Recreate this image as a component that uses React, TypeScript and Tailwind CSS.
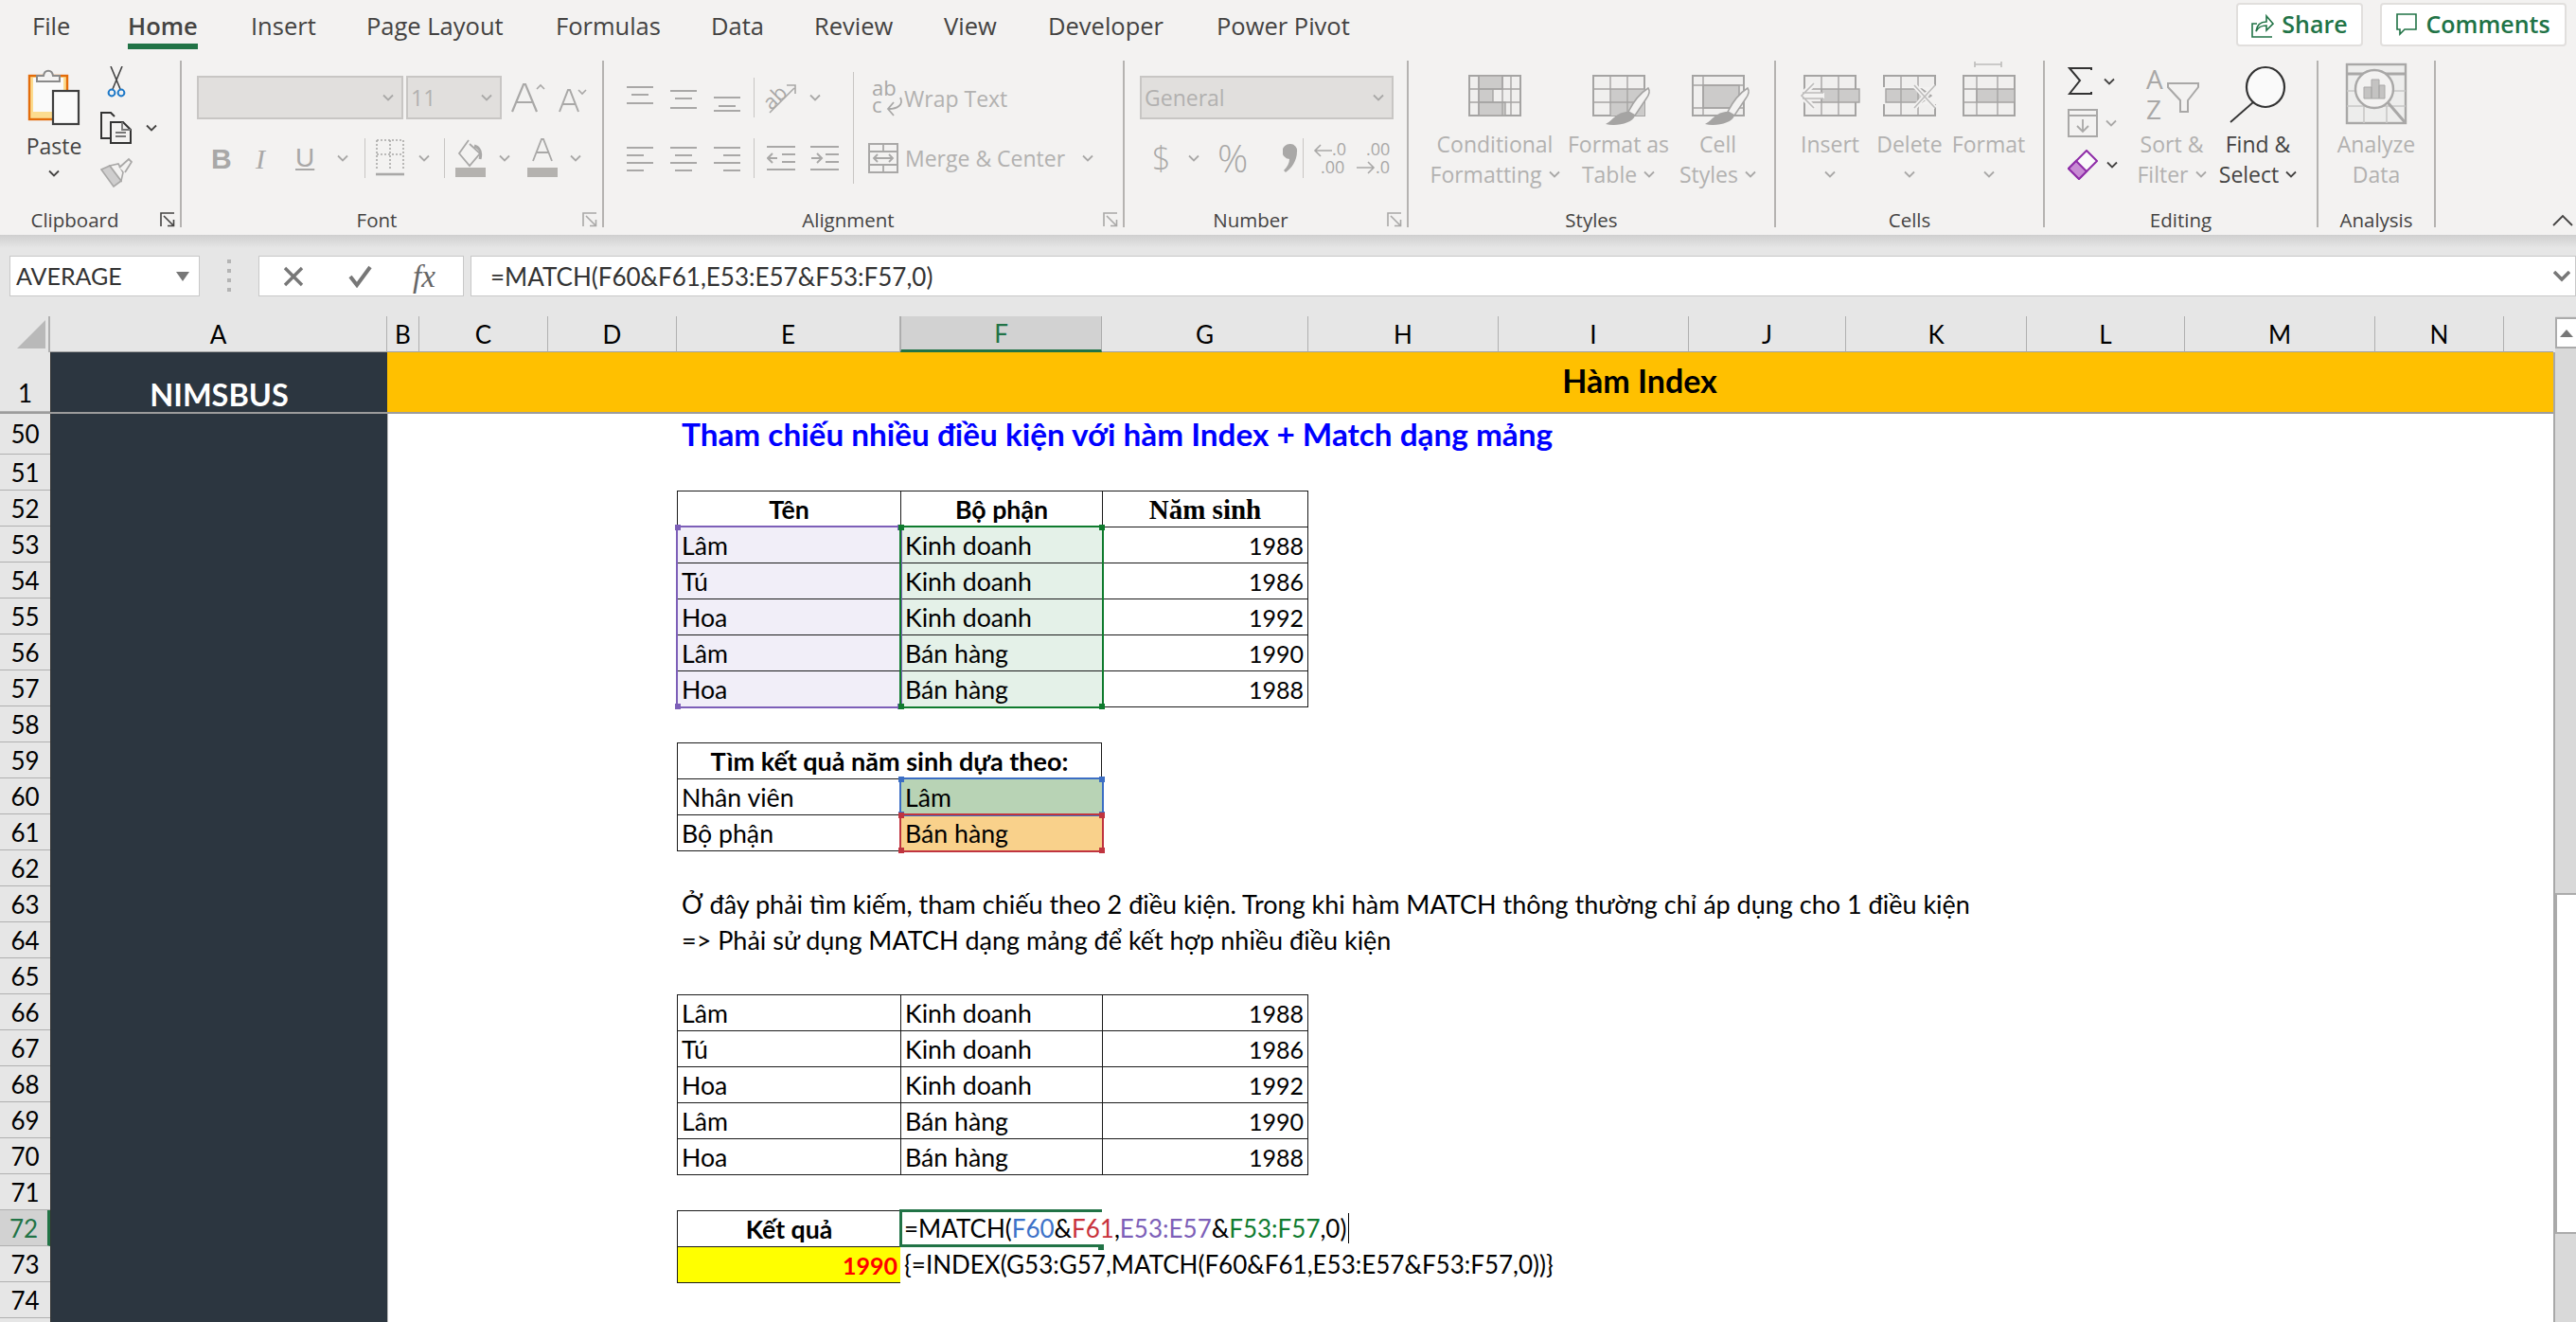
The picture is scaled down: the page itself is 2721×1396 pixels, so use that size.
import React from "react"

const COLS =
  "grid grid-cols-[53px_356px_34px_136px_136px_236px_213px_218px_201px_201px_166px_191px_167px_201px_136px_52px]"
const OFF = "#a9a8a7"
const ON = "#444342"
const SHEET = "font-['Lato','Noto_Sans',sans-serif] text-[26.7px] leading-[34px] text-black"

function Chev({ c = OFF, w = 12 }: { c?: string; w?: number }) {
  return (
    <svg width={w} height={8} viewBox="0 0 12 8" className="shrink-0">
      <path d="M1 1.5 6 6.5 11 1.5" fill="none" stroke={c} strokeWidth="1.8" />
    </svg>
  )
}

function Launcher({ c = OFF }: { c?: string }) {
  return (
    <svg width={16} height={16} viewBox="0 0 16 16">
      <path d="M1 15V1h14M4 4l10 10M8 14.5h6.5V8" fill="none" stroke={c} strokeWidth="1.6" />
    </svg>
  )
}

function VSep({ h = 42 }: { h?: number }) {
  return <div className="w-[1px] bg-[#c8c6c4] shrink-0" style={{ height: h }} />
}

// three or four strokes, used by all the alignment buttons
function Strokes({ rows, h = 30 }: { rows: [number, number, number][]; h?: number }) {
  return (
    <svg width={28} height={h} viewBox={`0 0 28 ${h}`} className="shrink-0">
      {rows.map(([y, a, b], i) => (
        <path key={i} d={`M${a} ${y}H${b}`} stroke={OFF} strokeWidth="2" />
      ))}
    </svg>
  )
}

function PasteIcon() {
  return (
    <svg width={56} height={62} viewBox="0 0 56 62">
      <rect x="2" y="9" width="40" height="46" fill="#fcdc8f" stroke="#e36c0a" strokeWidth="2.4" />
      <rect x="6" y="11" width="32" height="36" fill="#fafafa" />
      <path d="M10 15V9h7c1-7 9-7 10 0h7v6z" fill="#f3f2f1" stroke="#8a8a8a" strokeWidth="2" />
      <rect x="27" y="25" width="27" height="35" fill="#fafafa" stroke="#3f3f3f" strokeWidth="2.2" />
    </svg>
  )
}

function CutIcon() {
  return (
    <svg width={22} height={34} viewBox="0 0 22 34">
      <path d="M5 0l10 24M17 0L7 24" fill="none" stroke="#444" strokeWidth="1.6" />
      <circle cx="6" cy="28" r="3.4" fill="none" stroke="#1e79c8" strokeWidth="2" />
      <circle cx="16" cy="28" r="3.4" fill="none" stroke="#1e79c8" strokeWidth="2" />
    </svg>
  )
}

function CopyIcon() {
  return (
    <svg width={34} height={34} viewBox="0 0 34 34">
      <path d="M10 28H1V1h10l4 4" fill="none" stroke="#333" strokeWidth="2" />
      <path d="M11 11h13l8 8v14H11z" fill="none" stroke="#333" strokeWidth="2" />
      <path d="M23 11v8h9M16 22h11M16 26h11" fill="none" stroke="#777" strokeWidth="1.8" />
    </svg>
  )
}

function BrushIcon() {
  return (
    <svg width={34} height={32} viewBox="0 0 34 32">
      <path d="M10 9 1 13l13 18 8-6z" fill="#cfcece" stroke="#a9a8a7" strokeWidth="1.6" />
      <path d="M10 9l9-2 5 9-2 9z" fill="#f3f2f1" stroke="#a9a8a7" strokeWidth="1.6" />
      <path d="M20 11 30 2l3 3-7 11" fill="#f3f2f1" stroke="#a9a8a7" strokeWidth="1.8" />
    </svg>
  )
}

function BordersIcon() {
  return (
    <svg width={30} height={42} viewBox="0 0 30 42">
      <path d="M1 2h28M1 2v30M29 2v30M1 17h28M15 2v30" fill="none" stroke={OFF} strokeWidth="1.6" strokeDasharray="2 2" />
      <path d="M0 38h30" stroke={OFF} strokeWidth="2.6" />
    </svg>
  )
}

function FillIcon() {
  return (
    <svg width={32} height={42} viewBox="0 0 32 42">
      <path d="M14 2 4 16l11 13 11-13L15 6" fill="none" stroke={OFF} strokeWidth="1.8" />
      <path d="M20 8c6 2 8 6 6 14" fill="none" stroke={OFF} strokeWidth="3" />
      <rect x="0" y="31" width="32" height="10" fill="#b4b2af" />
    </svg>
  )
}

function FontColorIcon() {
  return (
    <svg width={32} height={42} viewBox="0 0 32 42">
      <path d="M6 24 15 1h2l9 23M10 15h12" fill="none" stroke={OFF} strokeWidth="1.8" />
      <rect x="0" y="31" width="32" height="10" fill="#b4b2af" />
    </svg>
  )
}

function Brush({ g }: { g: string }) {
  return (
    <>
      <path d="M64 31C66 34 65 38 62 42L50 60 43 56C48 46 56 36 64 31z" fill="#f3f2f1" stroke={g} strokeWidth="1.6" />
      <path d="M43 56 50 60C48 68 30 72 19 69 26 66 30 56 43 56z" fill={g} />
    </>
  )
}

function GridIcon({ kind }: { kind: "cond" | "table" | "cell" | "insert" | "delete" | "format" }) {
  const g = "#a5a4a3"
  return (
    <svg width={66} height={62} viewBox="0 0 66 62" className="shrink-0 overflow-visible">
      {kind === "cond" && (
        <>
          <rect x="6" y="18" width="54" height="42" fill="#f0efee" stroke={g} strokeWidth="2" />
          <path d="M16 18h25v14H16zM16 32h15v14H16zM16 46h28v14H16z" fill="#cccbca" stroke={g} strokeWidth="1.4" />
          <path d="M6 32h54M6 46h54M16 18v42M41 18v42M50 18v42" stroke={g} strokeWidth="1.4" />
        </>
      )}
      {kind === "table" && (
        <>
          <rect x="6" y="18" width="54" height="42" fill="#f0efee" stroke={g} strokeWidth="2" />
          <path d="M24 32h36v28H24z" fill="#cccbca" />
          <path d="M6 32h54M6 46h54M24 18v42M42 18v42" stroke={g} strokeWidth="1.4" />
          <Brush g={g} />
        </>
      )}
      {kind === "cell" && (
        <>
          <rect x="6" y="18" width="54" height="42" fill="#f0efee" stroke={g} strokeWidth="2" />
          <path d="M17 28h38v24H17z" fill="#cccbca" stroke={g} strokeWidth="1.6" />
          <path d="M6 28h54M6 52h54M17 18v42" stroke={g} strokeWidth="1.4" />
          <Brush g={g} />
        </>
      )}
      {kind === "insert" && (
        <>
          <rect x="6" y="18" width="54" height="42" fill="#f0efee" stroke={g} strokeWidth="2" />
          <path d="M24 32h40v14H24z" fill="#cccbca" stroke={g} strokeWidth="1.4" />
          <path d="M24 18v42M42 18v42M6 32h18M6 46h18" stroke={g} strokeWidth="1.4" />
          <path d="M16 26 3 39l13 13M3 39h24" fill="none" stroke="#f3f2f1" strokeWidth="6" />
          <path d="M16 26 3 39l13 13M4 36h22M4 42h22" fill="none" stroke="#bdbcbb" strokeWidth="1.6" />
        </>
      )}
      {kind === "delete" && (
        <>
          <path d="M6 30V18h54v12M6 48v12h54V48" fill="#f0efee" stroke={g} strokeWidth="2" />
          <path d="M8 32h38l10 7-10 7H8z" fill="#cccbca" stroke={g} strokeWidth="1.4" />
          <path d="M24 18v42M42 18v42" stroke={g} strokeWidth="1.4" />
          <path d="M38 28l22 24M60 28 38 52" stroke="#f3f2f1" strokeWidth="5" />
          <path d="M38 28l22 24M60 28 38 52" stroke="#bdbcbb" strokeWidth="1.6" />
        </>
      )}
      {kind === "format" && (
        <>
          <rect x="6" y="18" width="54" height="42" fill="#f0efee" stroke={g} strokeWidth="2" />
          <path d="M20 32h40v14H20z" fill="#cccbca" stroke={g} strokeWidth="1.4" />
          <path d="M20 18v42M42 18v42M6 32h14M6 46h14" stroke={g} strokeWidth="1.4" />
          <path d="M18 6h28M18 3v6M46 3v6" stroke="#bdbcbb" strokeWidth="1.6" />
        </>
      )}
    </svg>
  )
}

function BigBtn({
  center,
  width,
  icon,
  lines,
  chevOn,
  dark,
}: {
  center: number
  width: number
  icon: React.ReactNode
  lines: string[]
  chevOn?: boolean
  dark?: boolean
}) {
  const color = dark ? "text-[#444342]" : "text-[#b2b1b0]"
  return (
    <div className={"flex flex-col items-center shrink-0 " + color} style={{ width, marginLeft: center }}>
      <div className="h-[60px] flex items-end justify-center">{icon}</div>
      <div className="h-[32px] text-[23px] leading-[32px] whitespace-nowrap mt-[12px]">{lines[0]}</div>
      {lines[1] !== undefined ? (
        <div className="h-[32px] text-[23px] leading-[32px] whitespace-nowrap flex items-center gap-[7px]">
          {lines[1]}
          {chevOn && <Chev c={dark ? ON : OFF} />}
        </div>
      ) : (
        <div className="h-[32px] flex items-center">
          <Chev c={OFF} />
        </div>
      )}
    </div>
  )
}

function Group({
  w,
  label,
  launcher,
  launcherDark,
  children,
}: {
  w: number
  label: string
  launcher?: boolean
  launcherDark?: boolean
  children: React.ReactNode
}) {
  return (
    <div className="flex flex-col h-[176px] border-r-2 border-[#b5b3b1] shrink-0" style={{ width: w }}>
      <div className="h-[152px] flex">{children}</div>
      <div className="h-[24px] pt-[4px] grid grid-cols-[1fr_auto_1fr] items-center text-[20.5px] leading-[24px] text-[#444342]">
        <span />
        <span className={launcher ? "mr-[32px]" : ""}>{label}</span>
        <span className="justify-self-end pr-[5px]">{launcher && <Launcher c={launcherDark ? ON : OFF} />}</span>
      </div>
    </div>
  )
}

function Combo({ w, text }: { w: number; text?: string }) {
  return (
    <div
      className="h-[46px] bg-[#e1dfdd] border-2 border-[#c8c6c4] flex items-center justify-between pl-[3px] pr-[8px] text-[23px] leading-[30px] text-[#b2b1b0] shrink-0"
      style={{ width: w }}
    >
      <span>{text}</span>
      <Chev />
    </div>
  )
}

function Ribbon() {
  const tabs: [string, number][] = [
    ["File", 101],
    ["Home", 130],
    ["Insert", 122],
    ["Page Layout", 200],
    ["Formulas", 164],
    ["Data", 109],
    ["Review", 137],
    ["View", 110],
    ["Developer", 178],
    ["Power Pivot", 160],
  ]
  return (
    <div className="h-[248px] bg-[#f3f2f1] font-['Open_Sans',sans-serif]">
      <div className="h-[64px] flex pl-[34px]">
        {tabs.map(([t, w]) => (
          <div key={t} style={{ width: w }} className="shrink-0">
            <div
              className={
                "inline-block h-[52px] pt-[9px] text-[25.5px] leading-[36px] text-[#444342] " +
                (t === "Home" ? "font-semibold border-b-[6px] border-[#217346]" : "")
              }
            >
              {t}
            </div>
          </div>
        ))}
        <div className="ml-auto flex gap-[18px] pr-[10px] pt-[3px]">
          <div className="w-[134px] h-[46px] bg-white border-2 border-[#e1dfdd] rounded-[4px] flex items-center justify-center gap-[8px] text-[25px] font-semibold text-[#217346]">
            <svg width={24} height={28} viewBox="0 0 24 28">
              <path d="M22 27H1V13h5" fill="none" stroke="#217346" strokeWidth="1.6" />
              <path d="M5 21c1-7 5-10 11-10V5l7 8-7 7v-5c-5 0-8 1-11 6z" fill="none" stroke="#217346" strokeWidth="1.6" />
            </svg>
            Share
          </div>
          <div className="w-[197px] h-[46px] bg-white border-2 border-[#e1dfdd] rounded-[4px] flex items-center justify-center gap-[9px] text-[25px] font-semibold text-[#217346]">
            <svg width={22} height={24} viewBox="0 0 22 24">
              <path d="M1 1h20v16H9l-5 5v-5H1z" fill="none" stroke="#217346" strokeWidth="1.6" />
            </svg>
            Comments
          </div>
        </div>
      </div>

      <div className="flex relative">
        <Group w={192} label="Clipboard" launcher launcherDark>
          <div className="w-[106px] pl-[8px] flex flex-col items-center pt-[7px] shrink-0">
            <PasteIcon />
            <div className="text-[23px] leading-[32px] text-[#444342] mt-[5px]">Paste</div>
            <div className="mt-[9px]">
              <Chev c={ON} />
            </div>
          </div>
          <div className="flex flex-col pt-[6px] shrink-0">
            <div className="pl-[6px]">
              <CutIcon />
            </div>
            <div className="flex items-center gap-[14px] mt-[14px]">
              <CopyIcon />
              <Chev c={ON} />
            </div>
            <div className="mt-[14px]">
              <BrushIcon />
            </div>
          </div>
        </Group>

        <Group w={446} label="Font" launcher>
          <div className="flex flex-col pl-[16px] pt-[16px]">
            <div className="flex items-center">
              <Combo w={218} />
              <div className="w-[3px]" />
              <Combo w={101} text="11" />
              <svg width={36} height={32} viewBox="0 0 36 32" className="ml-[10px] shrink-0">
                <path d="M1 31 13 2h2l12 29M6 21h16" fill="none" stroke={OFF} strokeWidth="2.2" />
                <path d="M27 7l4-4 4 4" fill="none" stroke={OFF} strokeWidth="1.6" />
              </svg>
              <svg width={30} height={26} viewBox="0 0 30 26" className="ml-[14px] mt-[6px] shrink-0">
                <path d="M1 25 10 2h2l9 23M5 17h12" fill="none" stroke={OFF} strokeWidth="2" />
                <path d="M21 2l4 4 4-4" fill="none" stroke={OFF} strokeWidth="1.6" />
              </svg>
            </div>
            <div className="flex items-center h-[42px] mt-[20px] text-[#a9a8a7]">
              <span className="ml-[15px] w-[47px] text-[30px] font-bold font-['Liberation_Sans',sans-serif]">B</span>
              <span className="w-[42px] text-[30px] italic font-['Liberation_Serif',serif]">I</span>
              <span className="w-[44px] text-[28px] underline font-['Liberation_Sans',sans-serif]">U</span>
              <Chev />
              <div className="w-[17px]" />
              <VSep />
              <div className="w-[11px]" />
              <BordersIcon />
              <div className="w-[15px]" />
              <Chev />
              <div className="w-[15px]" />
              <VSep />
              <div className="w-[11px]" />
              <FillIcon />
              <div className="w-[14px]" />
              <Chev />
              <div className="w-[18px]" />
              <FontColorIcon />
              <div className="w-[13px]" />
              <Chev />
            </div>
          </div>
        </Group>

        <Group w={550} label="Alignment" launcher>
          <div className="flex flex-col pl-[24px] pt-[18px] w-[263px] shrink-0">
            <div className="flex items-center h-[42px]">
              <Strokes rows={[[4, 0, 28], [12, 5, 23], [21, 0, 28]]} />
              <div className="w-[18px]" />
              <Strokes rows={[[8, 0, 28], [16, 5, 23], [26, 0, 28]]} />
              <div className="w-[18px]" />
              <Strokes rows={[[15, 0, 28], [24, 5, 23], [29, 0, 28]]} />
              <div className="w-[14px]" />
              <VSep />
              <div className="w-[10px]" />
              <svg width={34} height={34} viewBox="0 0 34 34" className="shrink-0">
                <text x="1" y="25" fontSize="22" fill={OFF} transform="rotate(-45 12 20)">ab</text>
                <path d="M6 33 32 7M24 4h9v9" fill="none" stroke={OFF} strokeWidth="1.6" />
              </svg>
              <div className="w-[14px]" />
              <Chev />
            </div>
            <div className="flex items-center h-[42px] mt-[22px]">
              <Strokes rows={[[4, 0, 28], [12, 0, 18], [20, 0, 28], [28, 0, 18]]} />
              <div className="w-[18px]" />
              <Strokes rows={[[4, 0, 28], [12, 5, 23], [20, 0, 28], [28, 5, 23]]} />
              <div className="w-[18px]" />
              <Strokes rows={[[4, 0, 28], [12, 10, 28], [20, 0, 28], [28, 10, 28]]} />
              <div className="w-[14px]" />
              <VSep />
              <div className="w-[13px]" />
              <svg width={30} height={30} viewBox="0 0 30 30" className="shrink-0">
                <path d="M0 3h30M16 11h14M16 19h14M0 27h30M11 15H1M6 10l-5 5 5 5" fill="none" stroke={OFF} strokeWidth="2" />
              </svg>
              <div className="w-[16px]" />
              <svg width={30} height={30} viewBox="0 0 30 30" className="shrink-0">
                <path d="M0 3h30M16 11h14M16 19h14M0 27h30M1 15h10M7 10l5 5-5 5" fill="none" stroke={OFF} strokeWidth="2" />
              </svg>
            </div>
          </div>
          <div className="w-[1px] h-[118px] mt-[12px] bg-[#c8c6c4] shrink-0" />
          <div className="flex flex-col pl-[15px] text-[23px] text-[#b2b1b0]">
            <div className="flex items-center h-[42px] mt-[19px] pl-[4px]">
              <svg width={34} height={42} viewBox="0 0 34 42" className="shrink-0">
                <text x="0" y="18" fontSize="22" fill={OFF}>ab</text>
                <text x="0" y="36" fontSize="22" fill={OFF}>c</text>
                <path d="M30 20c4 8-4 12-12 12M23 25l-6 7 6 7" fill="none" stroke={OFF} strokeWidth="1.8" />
              </svg>
              <span className="whitespace-nowrap">Wrap Text</span>
            </div>
            <div className="flex items-center h-[42px] mt-[21px]">
              <svg width={32} height={32} viewBox="0 0 32 32" className="shrink-0">
                <rect x="1" y="1" width="30" height="30" fill="none" stroke={OFF} strokeWidth="2" />
                <path d="M1 9h30M1 23h30M16 1v8M16 23v8M6 16h20M10 12l-4 4 4 4M22 12l4 4-4 4" fill="none" stroke={OFF} strokeWidth="1.8" />
              </svg>
              <span className="ml-[7px] whitespace-nowrap">Merge &amp; Center</span>
              <div className="ml-[18px]">
                <Chev />
              </div>
            </div>
          </div>
        </Group>

        <Group w={300} label="Number" launcher>
          <div className="flex flex-col pl-[16px] pt-[16px]">
            <Combo w={268} text="General" />
            <div className="flex items-center h-[42px] mt-[20px] text-[#a9a8a7]">
              <span className="ml-[13px] w-[38px] text-[34px] font-light leading-none">$</span>
              <Chev />
              <span className="ml-[19px] w-[69px] text-[40px] font-light leading-none">%</span>
              <svg width={16} height={34} viewBox="0 0 16 34" className="shrink-0 mr-[5px]">
                <path d="M8 2a7 7 0 0 1 7 8c0 10-6 18-12 22l-2-2c4-4 6-8 6-12a7 7 0 0 1 1-16z" fill={OFF} />
              </svg>
              <VSep />
              <svg width={90} height={36} viewBox="0 0 90 36" className="shrink-0 ml-[10px]">
                <path d="M20 10H2M8 4 2 10l6 6" fill="none" stroke={OFF} strokeWidth="1.6" />
                <text x="20" y="15" fontSize="18" fill={OFF}>.0</text>
                <text x="8" y="34" fontSize="18" fill={OFF}>.00</text>
                <text x="56" y="15" fontSize="18" fill={OFF}>.00</text>
                <path d="M46 28h18M58 22l6 6-6 6" fill="none" stroke={OFF} strokeWidth="1.6" />
                <text x="66" y="34" fontSize="18" fill={OFF}>.0</text>
              </svg>
            </div>
          </div>
        </Group>

        <Group w={388} label="Styles">
          <BigBtn center={30} width={122} icon={<GridIcon kind="cond" />} lines={["Conditional", "Formatting"]} chevOn />
          <BigBtn center={9} width={121} icon={<GridIcon kind="table" />} lines={["Format as", "Table"]} chevOn />
          <BigBtn center={-4} width={97} icon={<GridIcon kind="cell" />} lines={["Cell", "Styles"]} chevOn />
        </Group>

        <Group w={284} label="Cells">
          <BigBtn center={15} width={84} icon={<GridIcon kind="insert" />} lines={["Insert"]} />
          <BigBtn center={0} width={84} icon={<GridIcon kind="delete" />} lines={["Delete"]} />
          <BigBtn center={0} width={83} icon={<GridIcon kind="format" />} lines={["Format"]} />
        </Group>

        <Group w={289} label="Editing">
          <div className="flex flex-col pl-[24px] pt-[6px] w-[88px] shrink-0">
            <div className="flex items-center h-[32px] gap-[12px]">
              <svg width={26} height={30} viewBox="0 0 26 30" className="shrink-0">
                <path d="M25 3V1H2l11 13L2 28h23v-2" fill="none" stroke="#333" strokeWidth="2" />
              </svg>
              <Chev c={ON} />
            </div>
            <div className="flex items-center h-[32px] gap-[8px] mt-[12px]">
              <svg width={32} height={30} viewBox="0 0 32 30" className="shrink-0">
                <rect x="1" y="1" width="30" height="28" fill="#f3f2f1" stroke={OFF} strokeWidth="2" />
                <path d="M1 7h30M16 11v13M10 18l6 6 6-6" fill="none" stroke={OFF} strokeWidth="1.8" />
              </svg>
              <Chev />
            </div>
            <div className="flex items-center h-[32px] gap-[9px] mt-[12px]">
              <svg width={32} height={32} viewBox="0 0 32 32" className="shrink-0">
                <path d="M20 1 31 12 12 31 1 20z" fill="#fafafa" stroke="#8f2da8" strokeWidth="2" />
                <path d="M1 20 9 12l11 11-8 8z" fill="#c88bd4" stroke="#8f2da8" strokeWidth="2" />
              </svg>
              <Chev c={ON} />
            </div>
          </div>
          <BigBtn center={0} width={92} icon={
            <svg width={58} height={60} viewBox="0 0 58 60" className="-mb-[4px]">
              <text x="2" y="26" fontSize="28" fill={OFF}>A</text>
              <text x="2" y="58" fontSize="28" fill={OFF}>Z</text>
              <path d="M25 20h32v4L46 38v12h-8V38L25 24z" fill="#f3f2f1" stroke={OFF} strokeWidth="2" />
            </svg>
          } lines={["Sort &", "Filter"]} chevOn />
          <BigBtn center={0} width={90} dark icon={
            <svg width={60} height={62} viewBox="0 0 60 62" className="-mb-[6px]">
              <ellipse cx="38" cy="24" rx="20" ry="21" fill="#fafafa" stroke="#333" strokeWidth="2.2" />
              <path d="M25 40 1 61" fill="none" stroke="#333" strokeWidth="1.8" />
            </svg>
          } lines={["Find &", "Select"]} chevOn />
        </Group>

        <Group w={124} label="Analysis">
          <BigBtn center={0} width={122} icon={
            <svg width={66} height={66} viewBox="0 0 66 66" className="-mb-[8px]">
              <rect x="2" y="2" width="62" height="62" fill="#ededec" stroke={OFF} strokeWidth="2.4" />
              <path d="M2 12h62" stroke={OFF} strokeWidth="3" />
              <path d="M2 30h62M2 46h62M20 46v18M44 46v18" stroke="#c8c7c6" strokeWidth="1.6" />
              <circle cx="31" cy="28" r="20" fill="#f3f2f1" stroke={OFF} strokeWidth="2.4" />
              <path d="M20 26h8v12h-8zM28 18h8v20h-8zM36 24h6v14h-6z" fill="#c4c3c2" stroke={OFF} strokeWidth="1" />
              <path d="M45 42 64 64" stroke={OFF} strokeWidth="3" />
            </svg>
          } lines={["Analyze", "Data"]} />
        </Group>

        <div className="ml-auto mr-[3px] self-end">
          <svg width={22} height={14} viewBox="0 0 22 14">
            <path d="M1 12 11 2l10 10" fill="none" stroke={ON} strokeWidth="1.8" />
          </svg>
        </div>
      </div>
    </div>
  )
}

function FormulaBar() {
  return (
    <div className="h-[86px] bg-[#e6e6e6] font-['Lato',sans-serif] text-[#333]">
      <div className="h-[14px] bg-gradient-to-b from-[#cfcfcf] to-[#e6e6e6]" />
      <div className="flex items-center mt-[8px] pl-[10px]">
        <div className="w-[201px] h-[43px] bg-white border border-[#c8c8c8] flex items-center justify-between pl-[6px] pr-[10px] text-[25px]">
          AVERAGE
          <svg width={14} height={10} viewBox="0 0 14 10">
            <path d="M0 0h14L7 10z" fill="#777" />
          </svg>
        </div>
        <div className="w-[62px] flex justify-center">
          <svg width={6} height={36} viewBox="0 0 6 36">
            <path d="M3 0v36" stroke="#b4b4b4" strokeWidth="4" strokeDasharray="4 6" />
          </svg>
        </div>
        <div className="w-[217px] h-[43px] bg-white border border-[#c8c8c8] flex items-center pl-[25px] shrink-0">
          <svg width={22} height={22} viewBox="0 0 22 22">
            <path d="M2 2l18 18M20 2 2 20" stroke="#777" strokeWidth="3.4" />
          </svg>
          <svg width={26} height={24} viewBox="0 0 26 24" className="ml-[47px]">
            <path d="M2 12l7 9L23 2" fill="none" stroke="#777" strokeWidth="4" />
          </svg>
          <span className="ml-[42px] text-[33px] leading-[40px] italic font-['Liberation_Serif',serif] text-[#666]">fx</span>
        </div>
        <div className="ml-[7px] flex-1 h-[43px] bg-white border border-[#c8c8c8] flex items-center justify-between pl-[20px] pr-[5px] text-[26px] leading-[36px]">
          =MATCH(F60&amp;F61,E53:E57&amp;F53:F57,0)
          <svg width={18} height={12} viewBox="0 0 18 12">
            <path d="M1 1l8 8 8-8" fill="none" stroke="#777" strokeWidth="3.4" />
          </svg>
        </div>
      </div>
    </div>
  )
}

function ColumnHeader() {
  const cols: [string, number][] = [
    ["A", 356], ["B", 34], ["C", 136], ["D", 136], ["E", 236], ["F", 213], ["G", 218],
    ["H", 201], ["I", 201], ["J", 166], ["K", 191], ["L", 167], ["M", 201], ["N", 136],
  ]
  return (
    <div className={"h-[38px] bg-[#e6e6e6] flex " + SHEET}>
      <div className="w-[53px] h-[38px] flex items-end justify-end pb-[4px] pr-[3px] border-r-2 border-[#b0b0b0]">
        <svg width={30} height={30} viewBox="0 0 30 30">
          <path d="M30 0v30H0z" fill="#b9b9b9" />
        </svg>
      </div>
      {cols.map(([c, w]) => (
        <div
          key={c}
          style={{ width: w }}
          className={
            "h-[38px] flex items-center justify-center border-r shrink-0 text-[26px] " +
            (c === "F"
              ? "bg-[#d2d2d2] border-l border-[#ababab] border-b-[3px] border-b-[#217346] text-[#217346]"
              : "border-[#b0b0b0] border-b border-b-[#a0a0a0]")
          }
        >
          {c}
        </div>
      ))}
      <div className="w-[52px] border-b border-[#a0a0a0]" />
    </div>
  )
}

function Row({ n, active, h = "h-[38px]", children }: { n: number; active?: boolean; h?: string; children?: React.ReactNode }) {
  return (
    <div className={COLS + " " + h}>
      <div
        className={
          "flex items-center justify-center text-[26px] border-b border-[#b0b0b0] " +
          (active ? "bg-[#d2d2d2] text-[#217346] border-r-[3px] border-r-[#217346]" : "bg-[#e6e6e6]")
        }
      >
        {n}
      </div>
      <div className="bg-[#2c3640] border-l border-[#333]" />
      <div className="col-span-3 border-l border-[#bbb]" />
      {children}
    </div>
  )
}

function Td({
  children,
  right,
  last,
  bold,
  center,
  fill = "",
}: {
  children?: React.ReactNode
  right?: boolean
  last?: boolean
  bold?: boolean
  center?: boolean
  fill?: string
}) {
  return (
    <div
      className={
        "relative flex items-center px-[4px] whitespace-nowrap border-t border-l border-[#1a1a1a] " +
        (last ? "border-r " : "") +
        (bold ? "font-bold " : "") +
        (center ? "justify-center " : "") +
        (right ? "justify-end text-[25px] " : "") +
        fill
      }
    >
      {children}
    </div>
  )
}

function Range({ c, h, w }: { c: string; h: number; w: number }) {
  const dot = "absolute w-[6px] h-[6px]"
  return (
    <div
      className="absolute -left-[2px] -top-[2px] border-2 z-10 pointer-events-none"
      style={{ borderColor: c, height: h + 3, width: w + 3 }}
    >
      <div className={dot + " -left-[3px] -top-[3px]"} style={{ background: c }} />
      <div className={dot + " -right-[3px] -top-[3px]"} style={{ background: c }} />
      <div className={dot + " -left-[3px] -bottom-[3px]"} style={{ background: c }} />
      <div className={dot + " -right-[3px] -bottom-[3px]"} style={{ background: c }} />
    </div>
  )
}

const TOP_TABLE: [string, string, number][] = [
  ["Lâm", "Kinh doanh", 1988],
  ["Tú", "Kinh doanh", 1986],
  ["Hoa", "Kinh doanh", 1992],
  ["Lâm", "Bán hàng", 1990],
  ["Hoa", "Bán hàng", 1988],
]

function Closing({ cols }: { cols: number }) {
  return (
    <>
      <div className="border-t border-[#1a1a1a]" />
      <div className="border-t border-[#1a1a1a]" />
      {cols === 3 && <div className="border-t border-[#1a1a1a]" />}
    </>
  )
}

function Sheet() {
  return (
    <div className={"flex-1 bg-white overflow-hidden " + SHEET}>
      <div className={COLS + " h-[65px] border-b-2 border-[#9c9c9c]"}>
        <div className="bg-[#e6e6e6] flex items-end justify-center text-[26px] pb-[2px] border-b border-[#b0b0b0]">1</div>
        <div className="bg-[#2c3640] flex items-end justify-center text-white font-bold text-[32.5px] leading-[36px] border-l border-[#333]">
          NIMSBUS
        </div>
        <div className="col-span-14 bg-[#ffc000] flex items-center justify-center pl-[358px] font-bold text-[34px] leading-[40px] pb-[3px]">
          Hàm Index
        </div>
      </div>

      <Row n={50} h="h-[43px]">
        <div className="flex items-end pl-[5px] pb-[2px] whitespace-nowrap text-[33.3px] leading-[40px] font-bold text-[#0000ff]">
          Tham chiếu nhiều điều kiện với hàm Index + Match dạng mảng
        </div>
      </Row>
      <Row n={51} />
      <Row n={52}>
        <Td bold center>Tên</Td>
        <Td bold center>Bộ phận</Td>
        <Td bold center last><span className="font-['Liberation_Serif',serif] text-[29px]">Năm sinh</span></Td>
      </Row>
      {TOP_TABLE.map(([a, b, y], i) => (
        <Row key={i} n={53 + i}>
          <Td fill="bg-[#f1eef8]">
            {i === 0 && <Range c="#7d5fb8" h={190} w={236} />}
            {a}
          </Td>
          <Td fill="bg-[#e4f1e8]">
            {i === 0 && <Range c="#0f7b2e" h={190} w={213} />}
            {b}
          </Td>
          <Td right last>{y}</Td>
        </Row>
      ))}
      <Row n={58}>
        <Closing cols={3} />
      </Row>
      <Row n={59}>
        <div className="col-span-2 relative flex items-center justify-center font-bold text-[27px] whitespace-nowrap border-t border-l border-r border-[#1a1a1a]">
          Tìm kết quả năm sinh dựa theo:
        </div>
      </Row>
      <Row n={60}>
        <Td>Nhân viên</Td>
        <Td fill="bg-[#b8d3b5]">
          <Range c="#3c6ec4" h={38} w={213} />
          Lâm
        </Td>
      </Row>
      <Row n={61}>
        <Td>Bộ phận</Td>
        <Td fill="bg-[#f9d18b]">
          <Range c="#c0343f" h={38} w={213} />
          Bán hàng
        </Td>
      </Row>
      <Row n={62}>
        <Closing cols={2} />
      </Row>
      <Row n={63}>
        <div className="flex items-center pl-[5px] text-[27px] whitespace-nowrap">
          Ở đây phải tìm kiếm, tham chiếu theo 2 điều kiện. Trong khi hàm MATCH thông thường chỉ áp dụng cho 1 điều kiện
        </div>
      </Row>
      <Row n={64}>
        <div className="flex items-center pl-[5px] text-[27px] whitespace-nowrap">
          =&gt; Phải sử dụng MATCH dạng mảng để kết hợp nhiều điều kiện
        </div>
      </Row>
      <Row n={65} />
      {TOP_TABLE.map(([a, b, y], i) => (
        <Row key={i} n={66 + i}>
          <Td>{a}</Td>
          <Td>{b}</Td>
          <Td right last>{y}</Td>
        </Row>
      ))}
      <Row n={71}>
        <Closing cols={3} />
      </Row>
      <Row n={72} active>
        <Td bold center>Kết quả</Td>
        <div className="relative flex items-center pl-[4px] text-[26px] whitespace-nowrap">
          <div className="absolute -left-[1px] -top-[1px] h-[40px] w-[214px] border-t-[3px] border-l-[3px] border-b-[3px] border-[#217346]" />
          <div className="absolute left-[209px] top-[36px] w-[6px] h-[6px] bg-[#217346]" />
          <span>=MATCH(</span>
          <span className="text-[#3c72c8]">F60</span>
          <span>&amp;</span>
          <span className="text-[#c8323c]">F61</span>
          <span>,</span>
          <span className="text-[#7d5fb8]">E53:E57</span>
          <span>&amp;</span>
          <span className="text-[#107c30]">F53:F57</span>
          <span>,0)</span>
          <span className="w-[1px] h-[32px] bg-black ml-[2px] shrink-0" />
        </div>
      </Row>
      <Row n={73}>
        <div className="bg-[#ffff00] border-t border-l border-[#1a1a1a] flex items-center justify-end px-[3px] font-bold text-[25px] text-[#ff0000]">
          1990
        </div>
        <div className="flex items-center pl-[4px] text-[26px] whitespace-nowrap">
          {"{=INDEX(G53:G57,MATCH(F60&F61,E53:E57&F53:F57,0))}"}
        </div>
      </Row>
      <Row n={74}>
        <div className="border-t border-[#1a1a1a]" />
      </Row>
      <Row n={75} />
    </div>
  )
}

function Scrollbar() {
  return (
    <div className="w-[22px] bg-[#d9d9d9] flex flex-col shrink-0">
      <div className="h-[33px] bg-white border-2 border-[#ababab] border-r-0 flex items-center justify-center mt-[1px]">
        <svg width={14} height={8} viewBox="0 0 14 8">
          <path d="M7 0l7 8H0z" fill="#777" />
        </svg>
      </div>
      <div className="h-[575px]" />
      <div className="h-[360px] bg-white border-2 border-r-0 border-[#ababab]" />
    </div>
  )
}

export default function App() {
  return (
    <div className="w-[2721px] h-[1396px] overflow-hidden bg-[#e6e6e6] flex flex-col">
      <Ribbon />
      <FormulaBar />
      <div className="flex h-[1062px] bg-[#e6e6e6]">
        <div className="w-[2699px] flex flex-col shrink-0">
          <ColumnHeader />
          <div className="flex-1 min-h-0 flex flex-col overflow-hidden border-r-2 border-[#a8a8a8]">
            <Sheet />
          </div>
        </div>
        <Scrollbar />
      </div>
    </div>
  )
}
